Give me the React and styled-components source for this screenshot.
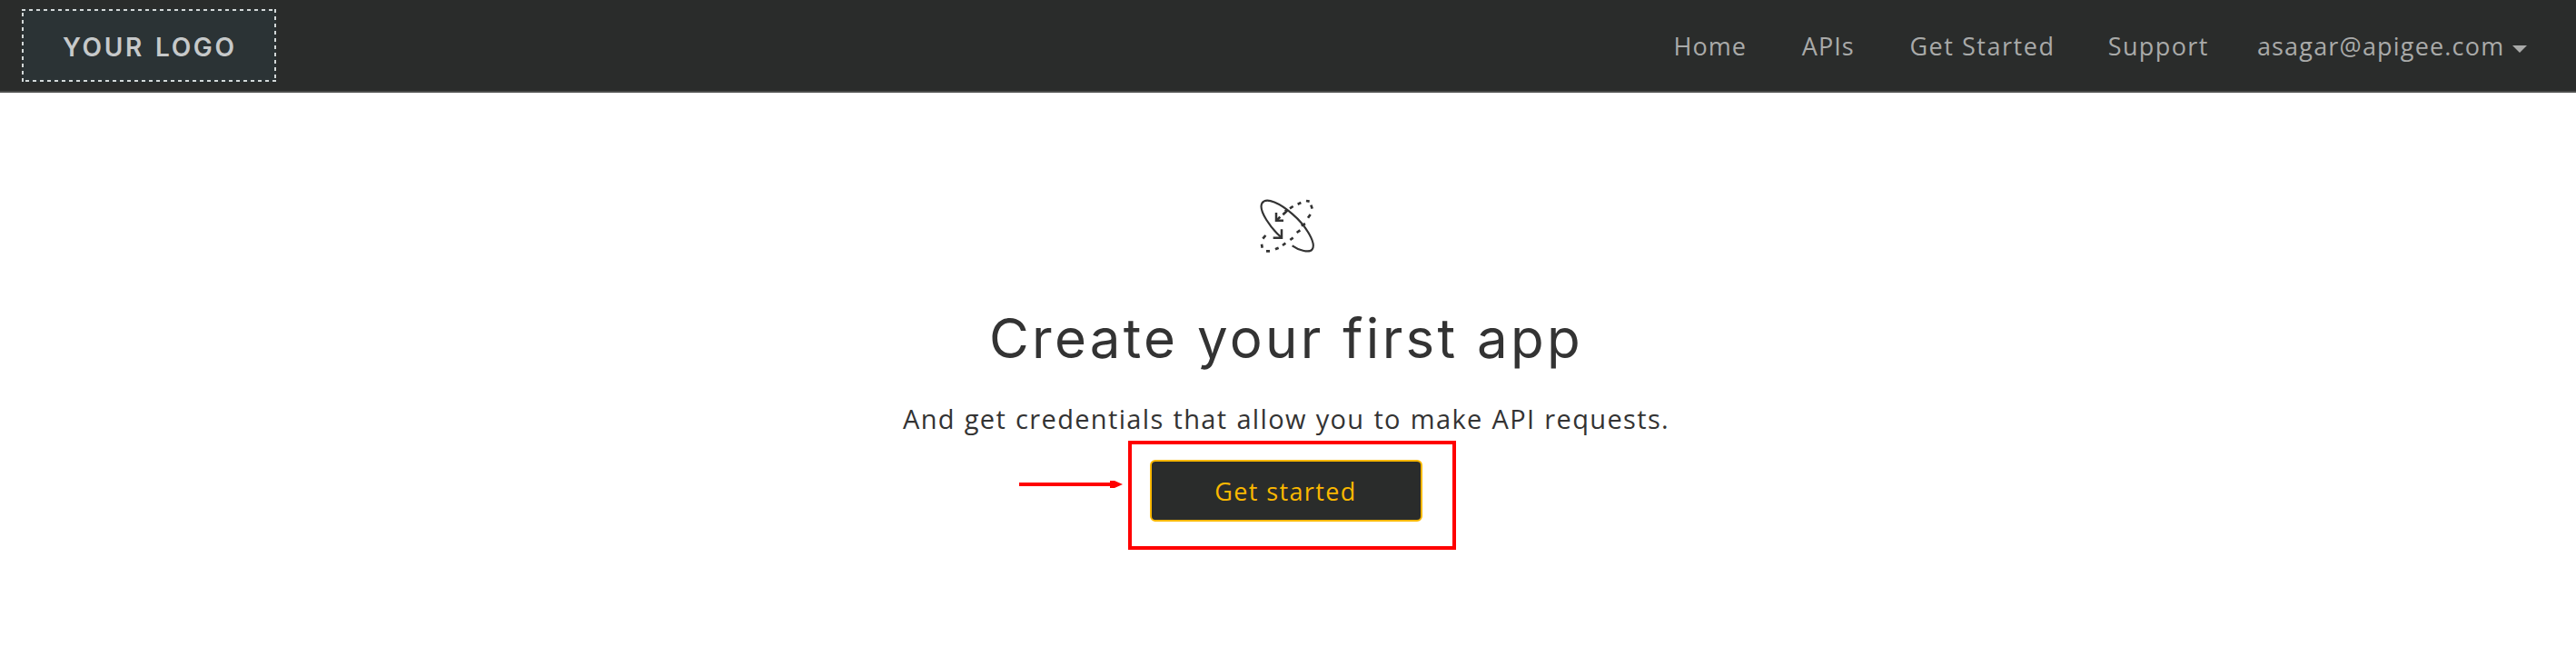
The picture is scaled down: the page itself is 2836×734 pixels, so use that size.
import React from 'react';
import styled, { createGlobalStyle } from 'styled-components';

const colors = {
  bar: '#2a2c2b',
  barEdge: '#4c4d4c',
  navText: '#a9aaa9',
  ink: '#333333',
  gold: '#fbb800',
  mark: '#ff0000',
  logoBg: '#2b3335',
  logoDash: '#d3d8d8',
  logoText: '#c6c9ca',
};

const GlobalStyle = createGlobalStyle`
  *, *::before, *::after { box-sizing: border-box; }
  body {
    margin: 0;
    background: #ffffff;
    color: ${colors.ink};
    font-family: "Open Sans", "Noto Sans", sans-serif;
  }
`;

const Page = styled.div`
  min-height: 734px;
  background: #ffffff;
`;

const Header = styled.header`
  display: flex;
  align-items: center;
  justify-content: space-between;
  height: 102px;
  padding: 0 54px 0 24px;
  background: ${colors.bar};
  border-bottom: 2px solid ${colors.barEdge};
`;

const dashes = (angle) =>
  `repeating-linear-gradient(${angle}, ${colors.logoDash} 0 4px, transparent 4px 8px)`;

const Logo = styled.a`
  display: flex;
  align-items: center;
  width: 280px;
  height: 80px;
  padding: 4px 0 0 45px;
  background:
    ${dashes('90deg')} 0 0 / 280px 2px no-repeat,
    ${dashes('90deg')} 4px 100% / 276px 2px no-repeat,
    ${dashes('180deg')} 0 4px / 2px 76px no-repeat,
    ${dashes('180deg')} 100% 0 / 2px 80px no-repeat,
    ${colors.logoBg};
  color: ${colors.logoText};
  font-family: "Inter", "Liberation Sans", sans-serif;
  font-size: 28px;
  font-weight: 600;
  letter-spacing: 2.7px;
  word-spacing: 2.1px;
  line-height: 36px;
  white-space: nowrap;
`;

const Nav = styled.nav`
  display: flex;
  align-items: center;
  height: 100px;
`;

const NavLink = styled.a`
  margin-left: ${(p) => p.$gap}px;
  padding-top: 2px;
  color: ${colors.navText};
  font-size: 27px;
  letter-spacing: ${(p) => p.$spacing}px;
  line-height: 36px;
  white-space: nowrap;
`;

const Caret = styled.span`
  width: 16px;
  height: 8px;
  margin: 8px 0 0 8.7px;
  background: ${colors.navText};
  clip-path: polygon(0 0, 100% 0, 50% 100%);
`;

const Hero = styled.main`
  display: flex;
  flex-direction: column;
  align-items: center;
  padding: 110px 4px 0 0;
`;

const OrbitSvg = styled.svg`
  width: 76px;
  height: 72px;
  margin-left: 4px;
  fill: none;
  stroke: ${colors.ink};
  stroke-width: 6.5;
`;

const Title = styled.h1`
  margin: 48px 0 0;
  font-family: "Inter", "Liberation Sans", sans-serif;
  font-size: 60px;
  font-weight: 400;
  letter-spacing: 3.3px;
  word-spacing: 0.4px;
  line-height: 80px;
  white-space: nowrap;
`;

const Lead = styled.p`
  margin: 29px 0 0;
  font-size: 29px;
  letter-spacing: 1.35px;
  word-spacing: 1px;
  line-height: 40px;
  white-space: nowrap;
`;

const Action = styled.div`
  position: relative;
  margin-top: 25px;
`;

const StartButton = styled.button`
  display: block;
  width: 300px;
  height: 68px;
  padding: 2px 1px 0 0;
  border: 2px solid ${colors.gold};
  border-radius: 6px;
  background: ${colors.bar};
  color: ${colors.gold};
  font-family: inherit;
  font-size: 27px;
  letter-spacing: 1.37px;
  line-height: 36px;
`;

const Highlight = styled.div`
  position: absolute;
  top: -21px;
  left: -24px;
  width: 361px;
  height: 120px;
  border: 4px solid ${colors.mark};
  pointer-events: none;
`;

const Pointer = styled.svg`
  position: absolute;
  top: 23px;
  left: -144px;
  width: 114px;
  height: 8px;
  fill: ${colors.mark};
`;

const links = [
  { label: 'Home', gap: 0, spacing: 1 },
  { label: 'APIs', gap: 60.9, spacing: 1.07 },
  { label: 'Get Started', gap: 60.6, spacing: 1.54 },
  { label: 'Support', gap: 58.2, spacing: 1.38 },
  { label: 'asagar@apigee.com', gap: 53.2, spacing: 1.18 },
];

function OrbitIcon() {
  return (
    <OrbitSvg viewBox="0 0 228 216" aria-hidden="true">
      <path d="M90 146C60 120 15 60 28 35C42 12 90 37 128 70C175 110 208 168 194 187C185 200 150 191 128 175" />
      <path d="M93 121V149H65M75 66V92H99" strokeWidth="7.5" />
      <path d="M78 90L88 80M97 73L107 64M105 56L112 64M120 52L131 45M146 38L157 33M174 27L185 29M190 41L194 53M180 83L188 72M158 109L171 103M143 132L154 124M121 156L131 149M96 174L106 167M72 187L83 182M42 193L54 193M27 170L29 182M31 152L40 141" strokeWidth="8" />
    </OrbitSvg>
  );
}

export default function App() {
  return (
    <Page>
      <GlobalStyle />
      <Header>
        <Logo>YOUR LOGO</Logo>
        <Nav>
          {links.map((link) => (
            <NavLink key={link.label} $gap={link.gap} $spacing={link.spacing}>
              {link.label}
            </NavLink>
          ))}
          <Caret />
        </Nav>
      </Header>
      <Hero>
        <OrbitIcon />
        <Title>Create your first app</Title>
        <Lead>And get credentials that allow you to make API requests.</Lead>
        <Action>
          <StartButton type="button">Get started</StartButton>
          <Highlight />
          <Pointer viewBox="0 0 114 8" aria-hidden="true">
            <path d="M0 2H100V0H105L114 4L105 8H100V6H0Z" />
          </Pointer>
        </Action>
      </Hero>
    </Page>
  );
}
